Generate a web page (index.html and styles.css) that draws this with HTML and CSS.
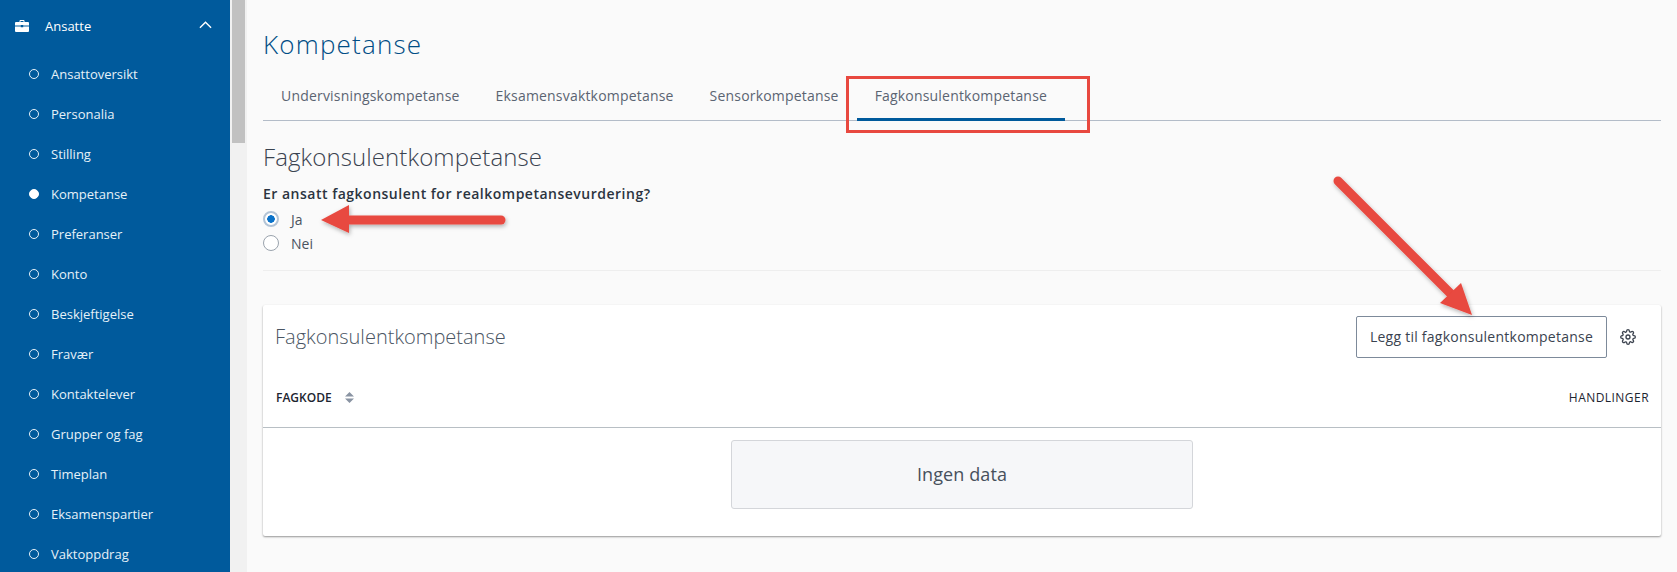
FILE: index.html
```html
<!DOCTYPE html>
<html lang="no">
<head>
<meta charset="utf-8">
<title>Kompetanse</title>
<link rel="stylesheet" href="styles.css">
</head>
<body>
<div class="app">
  <nav class="sidebar">
    <div class="nav-head">
      <svg class="brief" viewBox="0 0 14 12"><path d="M4.5 2V1a1 1 0 0 1 1-1h3a1 1 0 0 1 1 1v1H13a1 1 0 0 1 1 1v2.6H8.2V5H5.800V5.600H0V3a1 1 0 0 1 1-1zM5.500 1v1h3V1zM0 6.400h5.800V7.300h2.400V6.400H14V11a1 1 0 0 1-1 1H1a1 1 0 0 1-1-1z" fill="#fff"/></svg>
      <span class="nav-title">Ansatte</span>
      <svg class="chev" viewBox="0 0 14 8"><path d="M1 7l6-6 6 6" fill="none" stroke="#fff" stroke-width="1.500"/></svg>
    </div>
    <ul class="nav-list">
      <li class="nav-item"><i class="dot"></i>Ansattoversikt</li>
      <li class="nav-item"><i class="dot"></i>Personalia</li>
      <li class="nav-item"><i class="dot"></i>Stilling</li>
      <li class="nav-item"><i class="dot on"></i>Kompetanse</li>
      <li class="nav-item"><i class="dot"></i>Preferanser</li>
      <li class="nav-item"><i class="dot"></i>Konto</li>
      <li class="nav-item"><i class="dot"></i>Beskjeftigelse</li>
      <li class="nav-item"><i class="dot"></i>Fravær</li>
      <li class="nav-item"><i class="dot"></i>Kontaktelever</li>
      <li class="nav-item"><i class="dot"></i>Grupper og fag</li>
      <li class="nav-item"><i class="dot"></i>Timeplan</li>
      <li class="nav-item"><i class="dot"></i>Eksamenspartier</li>
      <li class="nav-item"><i class="dot"></i>Vaktoppdrag</li>
    </ul>
  </nav>
  <div class="scrollbar"><div class="thumb"></div></div>
  <main class="main">
    <h1 class="title">Kompetanse</h1>
    <div class="tabs">
      <span class="tab">Undervisningskompetanse</span>
      <span class="tab">Eksamensvaktkompetanse</span>
      <span class="tab">Sensorkompetanse</span>
      <span class="tab active">Fagkonsulentkompetanse</span>
    </div>
    <h2 class="subtitle">Fagkonsulentkompetanse</h2>
    <p class="question">Er ansatt fagkonsulent for realkompetansevurdering?</p>
    <div class="radio-group">
      <div class="radio"><i class="radio-mark checked"></i>Ja</div>
      <div class="radio"><i class="radio-mark"></i>Nei</div>
    </div>
    <hr class="rule">
    <section class="card">
      <div class="card-head">
        <h3 class="card-title">Fagkonsulentkompetanse</h3>
        <button class="btn">Legg til fagkonsulentkompetanse</button>
        <svg class="gear" viewBox="0 0 24 24" fill="none" stroke="#3d4450" stroke-width="2"><circle cx="12" cy="12" r="3"/><path d="M19.4 15a1.65 1.65 0 0 0 .33 1.82l.06.06a2 2 0 0 1 0 2.83 2 2 0 0 1-2.83 0l-.06-.06a1.65 1.65 0 0 0-1.82-.33 1.65 1.65 0 0 0-1 1.51V21a2 2 0 0 1-2 2 2 2 0 0 1-2-2v-.09A1.65 1.65 0 0 0 9 19.4a1.65 1.65 0 0 0-1.82.33l-.06.06a2 2 0 0 1-2.83 0 2 2 0 0 1 0-2.83l.06-.06a1.65 1.65 0 0 0 .33-1.82 1.65 1.65 0 0 0-1.51-1H3a2 2 0 0 1-2-2 2 2 0 0 1 2-2h.09A1.65 1.65 0 0 0 4.600 9a1.65 1.65 0 0 0-.33-1.82l-.06-.06a2 2 0 0 1 0-2.83 2 2 0 0 1 2.83 0l.06.06a1.65 1.65 0 0 0 1.82.33H9a1.65 1.65 0 0 0 1-1.51V3a2 2 0 0 1 2-2 2 2 0 0 1 2 2v.09a1.65 1.65 0 0 0 1 1.51 1.65 1.65 0 0 0 1.82-.33l.06-.06a2 2 0 0 1 2.83 0 2 2 0 0 1 0 2.83l-.06.06a1.65 1.65 0 0 0-.33 1.82V9a1.65 1.65 0 0 0 1.51 1H21a2 2 0 0 1 2 2 2 2 0 0 1-2 2h-.09a1.65 1.65 0 0 0-1.51 1z"/></svg>
      </div>
      <div class="table-head">
        <span class="th">FAGKODE</span>
        <svg class="sort" viewBox="0 0 9 11"><path d="M4.500 0L9 4.500H0zM4.500 11L0 6.500H9z" fill="#8a94a3"/></svg>
        <span class="th th-right">HANDLINGER</span>
      </div>
      <div class="table-body"><div class="empty">Ingen data</div></div>
    </section>
  </main>
</div>
<svg class="notes" viewBox="0 0 1677 572" width="1677" height="572">
  <defs><filter id="sh" x="-10%" y="-10%" width="120%" height="120%"><feDropShadow dx="1" dy="2" stdDeviation="2" flood-color="#000" flood-opacity=".3"/></filter></defs>
  <rect x="847.500" y="77.500" width="241" height="54" fill="none" stroke="#e8483f" stroke-width="3"/>
  <g filter="url(#sh)" fill="#e8483f" stroke="#e8483f">
    <path d="M501 220H345" stroke-width="9" stroke-linecap="round" fill="none"/>
    <path d="M321 220L349 205V233z" stroke="none"/>
    <path d="M1338 181L1452 295" stroke-width="9" stroke-linecap="round" fill="none"/>
    <path d="M1472 315L1461 283 1440 303z" stroke="none"/>
  </g>
</svg>
</body>
</html>
```
FILE: styles.css
```css
* { box-sizing: border-box; }
html, body { margin: 0; height: 572px; overflow: hidden; }
body { font-family: "Open Sans", "Noto Sans", sans-serif; font-size: 14px; color: #2b3440; background: #fafafa; position: relative; }
.app { display: flex; height: 572px; }

.sidebar { width: 230px; flex: none; background: #005a9c; color: #e6f1f8; overflow: hidden; }
.nav-head { height: 52px; margin-bottom: 2px; display: flex; align-items: center; padding: 0 18px 0 15px; color: #fff; }
.brief { width: 14px; height: 12px; margin-right: 16px; }
.nav-title { flex: 1; font-size: 13px; }
.chev { width: 13px; height: 8px; margin-bottom: 2px; }
.nav-list { list-style: none; margin: 0; padding: 0; }
.nav-item { height: 40px; display: flex; align-items: center; padding-left: 29px; font-size: 13px; font-weight: 400; }
.dot { width: 10px; height: 10px; border: 1.500px solid #e6f1f8; border-radius: 50%; margin-right: 12px; flex: none; }
.dot.on { background: #fff; border-color: #fff; }

.scrollbar { width: 17px; flex: none; background: #f1f1f1; padding-left: 2px; }
.thumb { width: 13px; height: 143px; background: #c1c1c1; }

.main { flex: 1; min-width: 0; padding: 0 16px; }
.title { margin: 0; padding-top: 26px; height: 76px; font-size: 26px; line-height: 36px; font-weight: 300; color: #004d85; letter-spacing: 1.2px; }
.tabs { display: flex; height: 45px; border-bottom: 1px solid #b3bcc8; }
.tab { padding: 0 18px; line-height: 40px; font-size: 14px; letter-spacing: .19px; color: #5a6472; }
.tab.active { height: 45px; border-bottom: 3px solid #005a9c; }
.subtitle { margin: 19px 0 0; font-size: 24px; line-height: 34px; font-weight: 300; letter-spacing: .1px; color: #3a4350; }
.question { margin: 10px 0 0; font-size: 14px; line-height: 20px; font-weight: 600; letter-spacing: .5px; color: #2b3440; }
.radio-group { margin-top: 3px; }
.radio { display: flex; align-items: center; height: 24px; font-size: 14px; color: #4a5360; }
.radio-mark { width: 16px; height: 16px; border: 1px solid #9aa3ad; border-radius: 50%; background: #fff; margin-right: 12px; flex: none; }
.radio-mark.checked { border: 2px solid #b3c4d6; background: radial-gradient(circle, #0a72c9 0 3.500px, #fff 4px); }
.rule { margin: 15px 0 0; height: 1px; border: 0; background: #eeeeee; }

.card { margin-top: 34px; height: 231px; background: #fff; border-radius: 2px; box-shadow: 0 1px 2px rgba(0,0,0,.4); }
.card-head { display: flex; align-items: center; height: 62px; padding: 1px 25px 0 12px; }
.card-title { flex: 1; margin: 0; font-size: 20px; font-weight: 300; color: #4a5563; }
.btn { width: 251px; height: 42px; padding: 0; background: #fff; border: 1px solid #7d8a9a; border-radius: 2px; font: 500 14px "Open Sans", sans-serif; letter-spacing: .25px; color: #3a4350; margin-right: 13px; }
.gear { width: 16px; height: 16px; }
.table-head { display: flex; align-items: center; height: 61px; padding: 0 12px 0 13px; border-bottom: 1px solid #b8bfc4; }
.th { font-size: 12px; font-weight: 600; color: #1d2530; }
.sort { width: 9px; height: 11px; margin-left: 13px; }
.th-right { margin-left: auto; font-weight: 400; letter-spacing: .45px; }
.table-body { display: flex; justify-content: center; padding-top: 12px; }
.empty { width: 462px; height: 69px; padding-bottom: 2px; background: #f6f7f9; border: 1px solid #d4d6da; border-radius: 3px; display: flex; align-items: center; justify-content: center; font-size: 18px; letter-spacing: .1px; color: #47505c; }

.notes { position: absolute; left: 0; top: 0; pointer-events: none; }
```
